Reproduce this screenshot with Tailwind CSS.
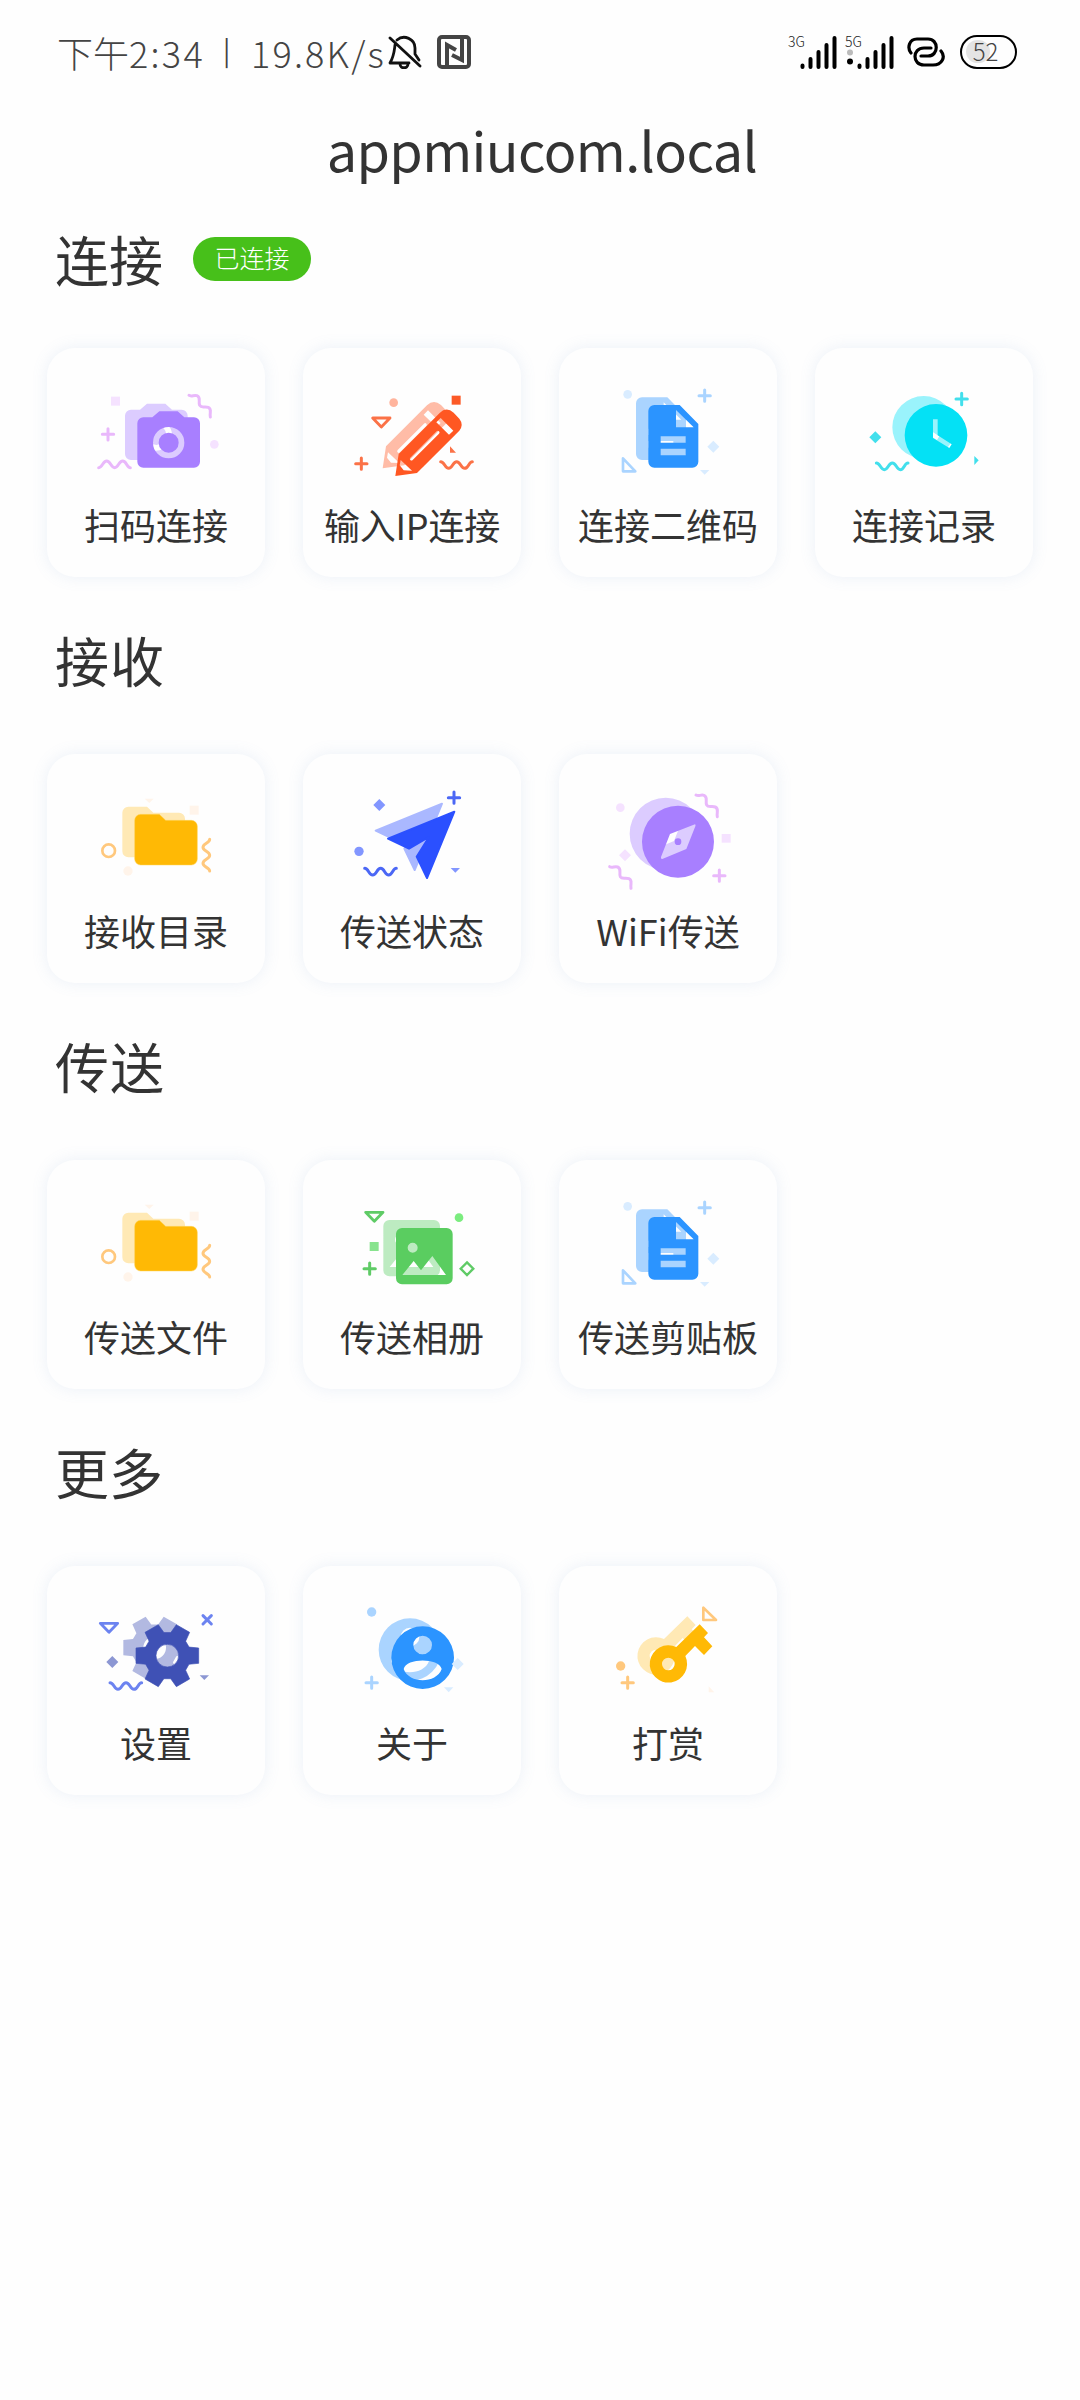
<!DOCTYPE html>
<html lang="zh-CN">
<head>
<meta charset="utf-8">
<title>appmiucom.local</title>
<script src="https://cdn.jsdelivr.net/npm/@tailwindcss/browser@4"></script>
</head>
<body class="min-h-[2400px] bg-[#fefefe] text-[#333] font-['Noto_Sans_CJK_SC',sans-serif]">
<svg class="hidden">
  <defs>
    <path id="wave" d="M0 0c12 0 12 20 24 20s12-20 24-20 12 20 24 20 12-20 23-20" fill="none" stroke="currentColor" stroke-width="9" stroke-linecap="round"/>
    <path id="zig" d="M0 0c8 5 14-2 24 1 13 5 3 18 8 29 5 9 15 2 26 6 12 5 3 16 6 29" fill="none" stroke="currentColor" stroke-width="9" stroke-linecap="round"/>
    <path id="plus" d="M-17 0H17M0-17V17" fill="none" stroke="currentColor" stroke-width="9" stroke-linecap="round"/>
    <path id="diamond" d="M0-18L18 0 0 18-18 0z" fill="currentColor"/>
    <path id="tri" d="M-26-13H26L0 14z" fill="none" stroke="currentColor" stroke-width="8.5" stroke-linejoin="round"/>
    <path id="camera" fill-rule="evenodd" d="M340 260H367L388 242H443L463 260H492a18 18 0 0 1 18 18V393a18 18 0 0 1-18 18H340a18 18 0 0 1-18-18V278a18 18 0 0 1 18-18zM416 289a47 47 0 1 0 0 94 47 47 0 0 0 0-94zM416 306a30 30 0 1 1 0 60 30 30 0 0 1 0-60z"/>
    <path id="pencil" fill-rule="evenodd" d="M1107 370L1230 247Q1250 227 1272 246L1289 264Q1303 282 1289 300L1162 427 1097 436zM1220 275L1258 312 1271 300 1233 262zM1142 381a4 4 0 0 0 7 7L1228 309a4 4 0 0 0-7-7zM1113 388L1110 404 1122 419 1147 420z"/>
    <path id="doc" fill-rule="evenodd" d="M344 223H420L476 280V393a18 18 0 0 1-18 18H344a18 18 0 0 1-18-18V241a18 18 0 0 1 18-18zM409 238V290H462zM363 317H438V336H363zM363 354H438V374H363z"/>
    <path id="clock" fill-rule="evenodd" d="M1190 220a94 94 0 1 0 0 188 94 94 0 0 0 0-188zM1181 266H1195V314L1237 341 1230 352 1181 322z"/>
    <path id="folder" d="M332 643H388L407 661H484a18 18 0 0 1 18 18V777a18 18 0 0 1-18 18H332a18 18 0 0 1-18-18V661a18 18 0 0 1 18-18z"/>
    <path id="plane" stroke-linejoin="round" stroke-width="6" d="M1075 716L1274 635 1192 834 1161 770 1198 711 1138 746z"/>
    <path id="compass" fill-rule="evenodd" d="M415 198a108 108 0 1 0 0 216 108 108 0 0 0 0-216zM466 254Q469 255 467 260L440 328 368 358Q362 358 364 352L391 283zM415 296a10 10 0 1 1 0 20 10 10 0 0 1 0-20z"/>
    <path id="photo" fill-rule="evenodd" d="M1117 264H1251a18 18 0 0 1 18 18V415a18 18 0 0 1-18 18H1117a18 18 0 0 1-18-18V282a18 18 0 0 1 18-18zM1149 308a15 15 0 1 0 0 30 15 15 0 0 0 0-30zM1118 405L1152 363 1174 391 1208 348 1249 405z"/>
    <path id="gear" fill-rule="evenodd" stroke-linejoin="round" stroke-width="2" d="M94-23V23L65 25.7 54.8 43.6 66.9 69.9 27.1 92.9 10.2 69.2H-10.4L-27.1 92.9-66.9 69.9-54.8 43.4-65.2 25.7-94 23V-23L-65-25.7-54.8-43.6-66.9-69.9-27.1-92.9-10.2-69.2H10.4L27.1-92.9 66.9-69.9 54.8-43.4 65.2-25.7zM0-34a34 34 0 1 0 0 68 34 34 0 0 0 0-68z"/>
    <path id="user" fill-rule="evenodd" d="M1179 618a94 94 0 1 0 0 188 94 94 0 0 0 0-188zM1179 646a28 28 0 1 1 0 56 28 28 0 0 1 0-56zM1122 746C1130 712 1228 712 1236 746 1220 791 1138 791 1122 746z"/>
    <path id="key" fill-rule="evenodd" d="M480 252L505 278 493 291 518 318 493 344 466 317 437 347A56 56 0 1 1 410 320zM386 352a19 19 0 1 0 0 38 19 19 0 0 0 0-38z"/>
    <g id="folder-art">
      <g fill="#fff4ea"><path d="M344 596H371L358 609z"/><path d="M479 617H506V644H479z"/><circle cx="294" cy="813" r="14"/></g>
      <use href="#folder" x="-37" y="-23" fill="#ffe9b5"/>
      <use href="#folder" fill="#ffb905" stroke="#ffd45f" stroke-width="1.5"/>
      <circle cx="236" cy="752" r="19" fill="none" stroke="#ffc87d" stroke-width="8"/>
      <use href="#wave" class="text-[#ffc87d]" transform="translate(539 718) rotate(90)"/>
    </g>
    <g id="doc-art">
      <circle cx="264" cy="191" r="13" fill="#d9ecff"/>
      <use href="#doc" x="-37" y="-23" fill="#aad4ff"/>
      <use href="#doc" fill="#2b94ff"/>
      <use href="#plus" x="495" y="195" class="text-[#aad4ff]"/>
      <use href="#diamond" x="521" y="348" class="text-[#d9ecff]"/>
      <path d="M481 418H509L495 432z" fill="#d9ecff"/>
      <path d="M250 383V422H287z" fill="none" stroke="#aad4ff" stroke-width="8" stroke-linejoin="round"/>
    </g>
  </defs>
</svg>

<header class="flex h-[106px] items-center pl-[57px] pr-[63px] text-[#444]">
  <div class="flex h-[54px] w-[331px] items-center whitespace-nowrap pb-0.5 text-[36px] leading-[52px]">
    <span class="w-[72px] font-light">下午</span>
    <span class="w-[94px] font-light tracking-[2.300px]">2:34</span>
    <span class="w-[28px] pb-1 text-[27px]">|</span>
    <span class="font-light tracking-[2.200px]">19.8K/s</span>
  </div>
  <svg class="h-[34px] w-[34px] -mt-0.5" viewBox="0 0 34 34" fill="none" stroke="#111" stroke-width="2.800" stroke-linecap="round" stroke-linejoin="round">
    <path d="M2 3L32 31M9 5C16-1 27 4 27 13V19L31 25M7 10C6 18 6 21 2 28H21M12 29C12 34 20 34 20 29"/>
  </svg>
  <svg class="ml-[15px] -mt-0.5 h-[34px] w-[34px]" viewBox="0 0 34 34" fill="none" stroke="#444">
    <rect x="2" y="2" width="30" height="30" rx="3" stroke-width="4"/>
    <path d="M12 28H10V10L19 15M23 6H25V25L15 20" stroke-width="4"/>
  </svg>
  <div class="ml-auto flex items-center pb-0.5">
    <div class="flex h-[36px] w-[50px]">
      <span class="w-[14px] whitespace-nowrap text-[14px] leading-[15px] font-light text-[#222]">3G</span>
      <svg class="h-[36px] w-[36px] shrink-0" viewBox="14 0 36 36" overflow="visible">
        <path d="M14.500 31.500V33M22.500 25V33M30.500 18V33M38.500 11V33M46.500 4V33" stroke="#000" stroke-width="4" stroke-linecap="round"/>
      </svg>
    </div>
    <div class="ml-[7px] flex h-[36px] w-[50px]">
      <span class="w-[14px] whitespace-nowrap text-[14px] leading-[15px] font-light text-[#222]">5G</span>
      <svg class="h-[36px] w-[36px] shrink-0" viewBox="14 0 36 36" overflow="visible">
        <circle cx="5" cy="18.500" r="3" fill="#bbb"/><circle cx="5" cy="27.500" r="3" fill="#000"/>
        <path d="M14.500 31.500V33M22.500 25V33M30.500 18V33M38.500 11V33M46.500 4V33" stroke="#000" stroke-width="4" stroke-linecap="round"/>
      </svg>
    </div>
    <svg class="ml-[12px] h-[30px] w-[38px]" viewBox="0 0 38 30" fill="none" stroke="#000" stroke-width="3.200" stroke-linecap="round">
      <path d="M4 16C0 11 2 2 10 2H21C32 2 32 19 21 19H14M24 11H17C5 11 5 28 17 28H26C35 28 39 20 34 14"/>
    </svg>
    <div class="relative ml-[15px] flex h-[34px] w-[57px] items-center justify-center rounded-full border-[2.500px] border-black text-[24px] font-light">
      <span class="absolute left-[4px] top-[3px] h-[23px] w-[24px] rounded-full bg-[#e4e4e4]"></span>
      <span class="relative -ml-1.5 -mt-0.5 leading-[30px]">52</span>
    </div>
  </div>
</header>

<h1 class="flex h-[84px] items-center justify-center whitespace-nowrap pt-px pl-1 text-[54px] leading-[80px] tracking-[-0.600px]">appmiucom.local</h1>

<main class="pl-[47px]">
  <section>
    <div class="flex h-[158px] items-center pb-[20px] pl-[8px]">
      <h2 class="text-[54px] leading-[80px]">连接</h2>
      <span class="ml-[30px] flex h-[44px] w-[118px] items-center justify-center rounded-full bg-[#47c01a] pb-1 text-[25px] leading-[36px] font-light text-white">已连接</span>
    </div>
    <div class="grid h-[229px] grid-cols-[repeat(4,218px)] gap-x-[38px]">
      <div class="flex flex-col items-center rounded-[28px] bg-[#fefefe] shadow-[0_0_16px_rgba(110,150,200,0.13)]">
        <svg class="h-[150px] w-[218px]" viewBox="51 52 654 450">
          <path d="M243 198H270V225H243z" fill="#f5e2ff"/><circle cx="553" cy="341" r="13" fill="#f5e2ff"/>
          <use href="#camera" x="-37" y="-23" fill="#dcccff"/><use href="#camera" fill="#a87fff"/>
          <g class="text-[#e9b8fb]"><use href="#zig" x="477" y="194"/><use href="#plus" x="234" y="311"/><use href="#wave" transform="translate(206 411) scale(1 -1)"/></g>
        </svg>
        <div class="mt-[6px] whitespace-nowrap text-[36px] leading-[40px]">扫码连接</div>
      </div>
      <div class="flex flex-col items-center rounded-[28px] bg-[#fefefe] shadow-[0_0_16px_rgba(110,150,200,0.13)]">
        <svg class="h-[150px] w-[218px]" viewBox="820 52 654 450">
          <circle cx="1092" cy="216" r="13" fill="#ffb49d"/><path d="M1266 195H1293V222H1266z" fill="#fc5a27"/>
          <use href="#pencil" x="-38" y="-23" fill="#ffbca7"/><use href="#pencil" fill="#ff5722"/>
          <g class="text-[#fb7247]"><use href="#tri" x="1055" y="275"/><use href="#plus" x="995" y="399"/><use href="#wave" x="1233" y="393"/></g>
          <path d="M1261 347L1279 366H1261z" fill="#fb7247"/>
        </svg>
        <div class="mt-[6px] whitespace-nowrap text-[36px] leading-[40px] tracking-[-0.200px]">输入IP连接</div>
      </div>
      <div class="flex flex-col items-center rounded-[28px] bg-[#fefefe] shadow-[0_0_16px_rgba(110,150,200,0.13)]">
        <svg class="h-[150px] w-[218px]" viewBox="58 52 654 450"><use href="#doc-art"/></svg>
        <div class="mt-[6px] whitespace-nowrap text-[36px] leading-[40px]">连接二维码</div>
      </div>
      <div class="flex flex-col items-center rounded-[28px] bg-[#fefefe] shadow-[0_0_16px_rgba(110,150,200,0.13)]">
        <svg class="h-[150px] w-[218px]" viewBox="827 52 654 450">
          <use href="#clock" x="-37" y="-24" fill="#9af3fc"/><use href="#clock" fill="#04e1f5"/>
          <g class="text-[#42dfec]"><use href="#plus" x="1267" y="205"/><use href="#diamond" x="1008" y="320"/><use href="#wave" x="1011" y="397"/></g>
          <path d="M1305 376V403L1318 389z" fill="#42dfec"/>
        </svg>
        <div class="mt-[6px] whitespace-nowrap text-[36px] leading-[40px]">连接记录</div>
      </div>
    </div>
  </section>

  <section>
    <div class="flex h-[177px] items-center pb-[12px] pl-[8px]"><h2 class="text-[54px] leading-[80px] tracking-[1px]">接收</h2></div>
    <div class="grid h-[229px] grid-cols-[repeat(4,218px)] gap-x-[38px]">
      <div class="flex flex-col items-center rounded-[28px] bg-[#fefefe] shadow-[0_0_16px_rgba(110,150,200,0.13)]">
        <svg class="h-[150px] w-[218px]" viewBox="51 462 654 450"><use href="#folder-art"/></svg>
        <div class="mt-[6px] whitespace-nowrap text-[36px] leading-[40px]">接收目录</div>
      </div>
      <div class="flex flex-col items-center rounded-[28px] bg-[#fefefe] shadow-[0_0_16px_rgba(110,150,200,0.13)]">
        <svg class="h-[150px] w-[218px]" viewBox="820 462 654 450">
          <use href="#plane" x="-37" y="-24" fill="#aab8ff" stroke="#aab8ff"/><use href="#plane" fill="#2b50ff" stroke="#2b50ff"/>
          <g class="text-[#8296ff]"><use href="#diamond" x="1049" y="615"/><circle cx="988" cy="754" r="14" fill="currentColor"/><path d="M1263 804H1291L1277 818z" fill="currentColor"/></g>
          <g class="text-[#4b67f5]"><use href="#plus" x="1273" y="593"/><use href="#wave" x="1005" y="805"/></g>
        </svg>
        <div class="mt-[6px] whitespace-nowrap text-[36px] leading-[40px]">传送状态</div>
      </div>
      <div class="flex flex-col items-center rounded-[28px] bg-[#fefefe] shadow-[0_0_16px_rgba(110,150,200,0.13)]">
        <svg class="h-[150px] w-[218px]" viewBox="58 43 654 450">
          <use href="#compass" x="-37" y="-24" fill="#dcccff"/><use href="#compass" fill="#a87fff"/>
          <g class="text-[#f5e2ff]"><circle cx="242" cy="204" r="13" fill="currentColor"/><use href="#diamond" x="256" y="347"/><path d="M546 283H573V309H546z" fill="currentColor"/></g>
          <g class="text-[#e9b8fb]"><use href="#zig" x="469" y="166"/><use href="#zig" x="210" y="381"/><use href="#plus" x="539" y="408"/></g>
        </svg>
        <div class="mt-[6px] whitespace-nowrap text-[36px] leading-[40px]">WiFi传送</div>
      </div>
    </div>
  </section>

  <section>
    <div class="flex h-[177px] items-center pb-[12px] pl-[8px]"><h2 class="text-[54px] leading-[80px] tracking-[1px]">传送</h2></div>
    <div class="grid h-[229px] grid-cols-[repeat(4,218px)] gap-x-[38px]">
      <div class="flex flex-col items-center rounded-[28px] bg-[#fefefe] shadow-[0_0_16px_rgba(110,150,200,0.13)]">
        <svg class="h-[150px] w-[218px]" viewBox="51 462 654 450"><use href="#folder-art"/></svg>
        <div class="mt-[6px] whitespace-nowrap text-[36px] leading-[40px]">传送文件</div>
      </div>
      <div class="flex flex-col items-center rounded-[28px] bg-[#fefefe] shadow-[0_0_16px_rgba(110,150,200,0.13)]">
        <svg class="h-[150px] w-[218px]" viewBox="820 60 654 450">
          <use href="#photo" x="-38" y="-24" fill="#bdebc1"/><use href="#photo" fill="#5acd60"/>
          <g class="text-[#5fcb66]"><use href="#tri" x="1034" y="230"/><use href="#plus" x="1020" y="386"/><path d="M1312 367L1331 386 1312 405 1293 386z" fill="none" stroke="currentColor" stroke-width="7"/></g>
          <circle cx="1288" cy="233" r="13" fill="#7bec7f"/><path d="M1020 306H1047V333H1020z" fill="#88e38e"/>
        </svg>
        <div class="mt-[6px] whitespace-nowrap text-[36px] leading-[40px]">传送相册</div>
      </div>
      <div class="flex flex-col items-center rounded-[28px] bg-[#fefefe] shadow-[0_0_16px_rgba(110,150,200,0.13)]">
        <svg class="h-[150px] w-[218px]" viewBox="58 52 654 450"><use href="#doc-art"/></svg>
        <div class="mt-[6px] whitespace-nowrap text-[36px] leading-[40px]">传送剪贴板</div>
      </div>
    </div>
  </section>

  <section>
    <div class="flex h-[177px] items-center pb-[12px] pl-[8px]"><h2 class="text-[54px] leading-[80px]">更多</h2></div>
    <div class="grid h-[229px] grid-cols-[repeat(4,218px)] gap-x-[38px]">
      <div class="flex flex-col items-center rounded-[28px] bg-[#fefefe] shadow-[0_0_16px_rgba(110,150,200,0.13)]">
        <svg class="h-[150px] w-[218px]" viewBox="51 437 654 450">
          <use href="#gear" x="374" y="682" fill="#b2b9e1"/><use href="#gear" x="412" y="706" fill="#3f51b5" stroke="#3f51b5"/>
          <g class="text-[#6c83f0]"><use href="#tri" x="237" y="622"/><use href="#wave" x="240" y="787"/><path d="M519 586L544 611M544 586L519 611" stroke="currentColor" stroke-width="9" stroke-linecap="round"/></g>
          <g class="text-[#8c97d3]"><use href="#diamond" x="247" y="725"/><path d="M509 765H537L523 779z" fill="currentColor"/></g>
        </svg>
        <div class="mt-[6px] whitespace-nowrap text-[36px] leading-[40px]">设置</div>
      </div>
      <div class="flex flex-col items-center rounded-[28px] bg-[#fefefe] shadow-[0_0_16px_rgba(110,150,200,0.13)]">
        <svg class="h-[150px] w-[218px]" viewBox="820 437 654 450">
          <use href="#user" x="-38" y="-24" fill="#aad4ff"/><use href="#user" fill="#2b94ff"/>
          <g class="text-[#d9ecff]"><use href="#diamond" x="1284" y="731"/><path d="M1243 801H1271L1257 816z" fill="currentColor"/></g>
          <g class="text-[#aad4ff]"><circle cx="1026" cy="575" r="14" fill="currentColor"/><use href="#plus" x="1026" y="787"/></g>
        </svg>
        <div class="mt-[6px] whitespace-nowrap text-[36px] leading-[40px]">关于</div>
      </div>
      <div class="flex flex-col items-center rounded-[28px] bg-[#fefefe] shadow-[0_0_16px_rgba(110,150,200,0.13)]">
        <svg class="h-[150px] w-[218px]" viewBox="58 77 654 450">
          <use href="#key" x="-37" y="-24" fill="#ffe9b5"/><use href="#key" fill="#ffb905"/>
          <path d="M507 438L524 456H507z" fill="#fff4ea"/>
          <g class="text-[#ffc87d]"><circle cx="243" cy="377" r="14" fill="currentColor"/><use href="#plus" x="264" y="427"/><path d="M491 202V239H529z" fill="none" stroke="currentColor" stroke-width="8" stroke-linejoin="round"/></g>
        </svg>
        <div class="mt-[6px] whitespace-nowrap text-[36px] leading-[40px]">打赏</div>
      </div>
    </div>
  </section>
</main>
</body>
</html>
